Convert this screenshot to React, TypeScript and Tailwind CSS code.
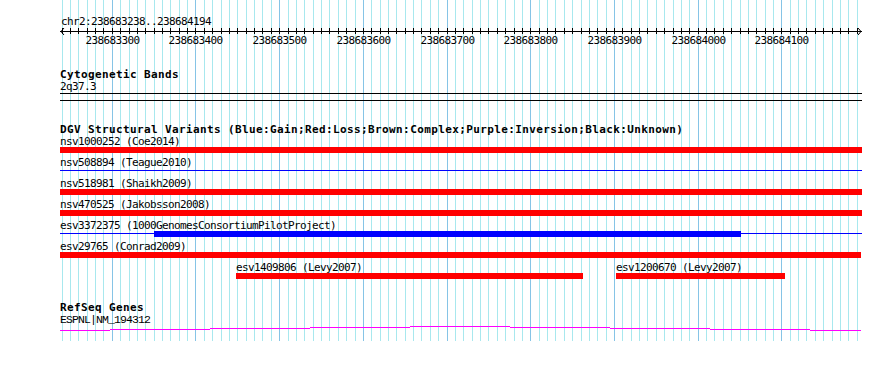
import React from 'react';

const START = 238683238;
const END = 238684194;
const LEFT = 60;
const SCALE = 801 / 957;
const toX = (p: number) => Math.floor(LEFT + (p - START) * SCALE + 0.4);

const ticks: number[] = [];
for (let p = 238683240; p <= END; p += 10) ticks.push(p);
const labels = ticks.filter((p) => p % 100 === 0);

type Feature = { name: string; x1: number; x2: number; color: string; thin?: boolean; thick?: [number, number] };

const rows: Feature[][] = [
  [{ name: 'nsv1000252 (Coe2014)', x1: 60, x2: 862, color: '#ff0000' }],
  [{ name: 'nsv508894 (Teague2010)', x1: 60, x2: 862, color: '#0000ff', thin: true }],
  [{ name: 'nsv518981 (Shaikh2009)', x1: 60, x2: 862, color: '#ff0000' }],
  [{ name: 'nsv470525 (Jakobsson2008)', x1: 60, x2: 862, color: '#ff0000' }],
  [
    {
      name: 'esv3372375 (1000GenomesConsortiumPilotProject)',
      x1: 60,
      x2: 862,
      color: '#0000ff',
      thin: true,
      thick: [154, 741],
    },
  ],
  [{ name: 'esv29765 (Conrad2009)', x1: 60, x2: 861, color: '#ff0000' }],
  [
    { name: 'esv1409806 (Levy2007)', x1: 236, x2: 583, color: '#ff0000' },
    { name: 'esv1200670 (Levy2007)', x1: 616, x2: 785, color: '#ff0000' },
  ],
];

// intron line of ESPNL, drawn as stepped segments: [x1, x2, y]
const geneSegments: [number, number, number][] = [
  [60, 110, 5],
  [110, 210, 4],
  [210, 310, 3],
  [310, 410, 2],
  [410, 510, 1],
  [510, 610, 2],
  [610, 710, 3],
  [710, 810, 4],
  [810, 861, 5],
];

const small = 'text-[11px] tracking-[-0.62px] text-black whitespace-nowrap';
const bold = 'text-[11px] leading-[13px] h-[13px] font-bold tracking-[0.38px] text-black whitespace-nowrap';

function Grid() {
  return (
    <svg className="absolute left-0 top-0" width={890} height={341}>
      {ticks.map((p) => (
        <rect
          key={p}
          x={toX(p)}
          y={0}
          width={1}
          height={341}
          fill={p % 100 === 0 ? '#86c4e6' : '#a8e8ee'}
        />
      ))}
    </svg>
  );
}

function Ruler() {
  return (
    <div className="flex flex-col">
      <div className={`${small} leading-[13px] h-[13px] pl-px`}>chr2:238683238..238684194</div>
      <svg className="block -ml-[60px]" width={890} height={7}>
        <rect x={60} y={3} width={802} height={1} fill="#000" />
        <polyline points="64,0 61,3.5 64,7" fill="none" stroke="#000" strokeWidth={1} />
        <polyline points="858,0 861,3.5 858,7" fill="none" stroke="#000" strokeWidth={1} />
        {ticks.map((p) => (
          <rect key={p} x={toX(p)} y={0} width={1} height={6} fill="#000" />
        ))}
      </svg>
      <div className="relative h-[13px]">
        {labels.map((p) => (
          <span
            key={p}
            className={`${small} leading-[12px] absolute top-0 -translate-x-1/2`}
            style={{ left: toX(p) - LEFT + 0.5 }}
          >
            {p}
          </span>
        ))}
      </div>
    </div>
  );
}

function Bar({ f }: { f: Feature }) {
  if (!f.thin) return <div className="h-[6px] w-full" style={{ backgroundColor: f.color }} />;
  const [a, b] = f.thick ?? [f.x2, f.x2];
  return (
    <div className="flex items-start w-full">
      <div className="h-px mt-[2px]" style={{ width: a - f.x1, backgroundColor: f.color }} />
      {f.thick && <div className="h-[6px]" style={{ width: b - a, backgroundColor: f.color }} />}
      <div className="h-px mt-[2px] flex-1" style={{ backgroundColor: f.color }} />
    </div>
  );
}

function Row({ features }: { features: Feature[] }) {
  let prev = LEFT;
  return (
    <div className="flex h-[21px] w-[802px]">
      {features.map((f) => {
        const gap = f.x1 - prev;
        prev = f.x2;
        return (
          <div key={f.name} className="flex flex-col shrink-0" style={{ marginLeft: gap, width: f.x2 - f.x1 }}>
            <div className={`${small} leading-[11px] h-[11px]`}>{f.name}</div>
            <Bar f={f} />
          </div>
        );
      })}
    </div>
  );
}

export default function App() {
  return (
    <div className="relative w-[890px] h-[386px] bg-white overflow-hidden font-['DejaVu_Sans_Mono',monospace]">
      <Grid />
      <div className="relative flex flex-col pl-[60px] pt-[15px]">
        <Ruler />

        <div className={`${bold} mt-[20px]`}>Cytogenetic Bands</div>
        <div className={`${small} leading-[11px] h-[12px]`}>2q37.3</div>
        <div className="w-[802px] h-px bg-black" />
        <div className="w-[802px] h-px bg-black mt-[6px]" />

        <div className={`${bold} mt-[22px]`}>
          DGV Structural Variants (Blue:Gain;Red:Loss;Brown:Complex;Purple:Inversion;Black:Unknown)
        </div>
        <div className="flex flex-col">
          {rows.map((r, i) => (
            <Row key={i} features={r} />
          ))}
        </div>

        <div className={`${bold} mt-[18px]`}>RefSeq Genes</div>
        <div className="font-['Liberation_Mono',monospace] text-[11.5px] leading-[11px] h-[11px] tracking-[-0.9px] text-black whitespace-nowrap">
          ESPNL|NM_194312
        </div>
        <svg className="block -ml-[60px]" width={890} height={6}>
          {geneSegments.map(([a, b, y]) => (
            <rect key={a} x={a} y={y} width={b - a} height={1} fill="#ff00ff" />
          ))}
        </svg>
      </div>
    </div>
  );
}
